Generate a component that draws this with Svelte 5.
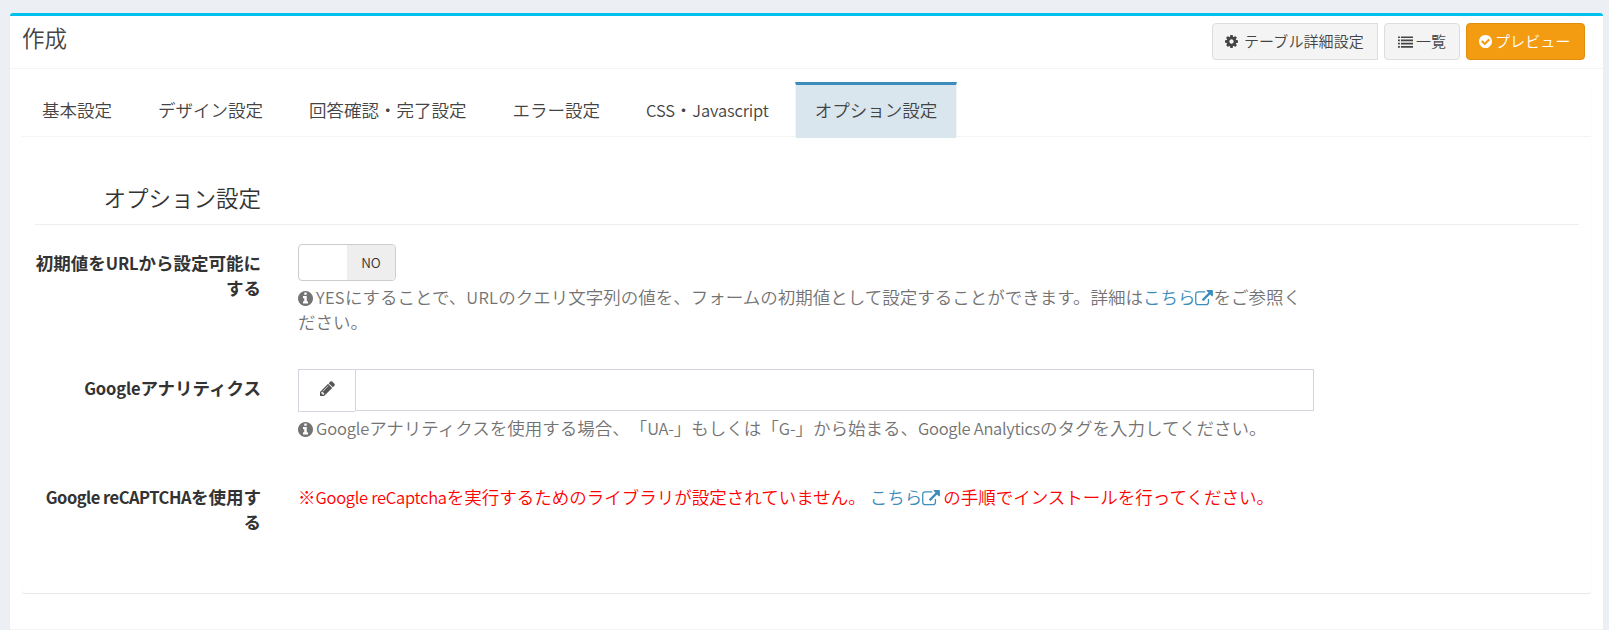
<script>
  const tabs = ['基本設定', 'デザイン設定', '回答確認・完了設定', 'エラー設定', 'CSS・Javascript', 'オプション設定'];
  const split = (text) => text.split(/([A-Za-z]+)/).filter(Boolean);
  const isLatin = (text) => /^[A-Za-z]/.test(text);
  let active = $state(5);
  const ring = 'm640 416q0 209-103 385.5t-279.5 279.5-385.5 103-385.5-103-279.5-279.5-103-385.5 103-385.5 279.5-279.5 385.5-103 385.5 103 279.5 279.5 103 385.5z';
  const icons = {
    cog: 'M1152 896q0-106-75-181t-181-75-181 75-75 181 75 181 181 75 181-75 75-181zm512-109v222q0 12-8 23t-20 13l-185 28q-19 54-39 91 35 50 107 138 10 12 10 25t-9 23q-27 37-99 108t-94 71q-12 0-26-9l-138-108q-44 23-91 38-16 136-29 186-7 28-36 28h-222q-14 0-24.5-8.5t-11.5-21.5l-28-184q-49-16-90-37l-141 107q-10 9-25 9-14 0-25-11-126-114-165-168-7-10-7-23 0-12 8-23 15-21 51-66.5t54-70.5q-27-50-41-99l-183-27q-13-2-21-12.5t-8-23.5v-222q0-12 8-23t19-13l186-28q14-46 39-92-40-57-107-138-10-12-10-24 0-10 9-23 26-36 98.5-107.5t94.5-71.5q13 0 26 10l138 107q44-23 91-38 16-136 29-186 7-28 36-28h222q14 0 24.5 8.5t11.5 21.5l28 184q49 16 90 37l142-107q9-9 24-9 13 0 25 10 129 119 165 170 7 8 7 22 0 12-8 23-15 21-51 66.5t-54 70.5q26 50 41 98l183 28q13 2 21 12.5t8 23.5z',
    list: 'M0 1312h224v192H0zM0 928h224v192H0zM0 544h224v192H0zM0 160h224v192H0zM352 1312h1440v192H352zM352 928h1440v192H352zM352 544h1440v192H352zM352 160h1440v192H352z',
    check: 'M1412 734q0-28-18-46l-91-90q-19-19-45-19t-45 19l-408 407-226-226q-19-19-45-19t-45 19l-91 90q-18 18-18 46 0 27 18 45l362 362q19 19 45 19 27 0 46-19l543-543q18-18 18-45zm252 162q0 209-103 385.5t-279.5 279.5-385.5 103-385.5-103-279.5-279.5-103-385.5 103-385.5 279.5-279.5 385.5-103 385.5 103 279.5 279.5 103 385.5z',
    info: 'M1152 1376v-160q0-14-9-23t-23-9h-96v-512q0-14-9-23t-23-9h-320q-14 0-23 9t-9 23v160q0 14 9 23t23 9h96v320h-96q-14 0-23 9t-9 23v160q0 14 9 23t23 9h448q14 0 23-9t9-23zm-128-896v-160q0-14-9-23t-23-9h-192q-14 0-23 9t-9 23v160q0 14 9 23t23 9h192q14 0 23-9t9-23z' + ring,
    pencil: 'M491 1536l91-91-235-235-91 91v107h128v128h107zm523-928q0-22-22-22-10 0-17 7l-542 542q-7 7-7 17 0 22 22 22 10 0 17-7l542-542q7-7 7-17zm-54-192l416 416-832 832h-416v-416zm683 96q0 53-37 90l-166 166-416-416 166-165q36-38 90-38 53 0 91 38l235 234q37 39 37 91z',
    external: 'M1408 928v320q0 119-84.5 203.5t-203.5 84.5h-832q-119 0-203.5-84.5t-84.5-203.5v-832q0-119 84.5-203.5t203.5-84.5h704q14 0 23 9t9 23v64q0 14-9 23t-23 9h-704q-66 0-113 47t-47 113v832q0 66 47 113t113 47h832q66 0 113-47t47-113v-320q0-14 9-23t23-9h64q14 0 23 9t9 23zm384-864v512q0 26-19 45t-45 19-45-19l-176-176-652 652q-10 10-23 10t-23-10l-114-114q-10-10-10-23t10-23l652-652-176-176q-19-19-19-45t19-45 45-19h512q26 0 45 19t19 45z'
  };
</script>

{#snippet icon(name, box)}
  <svg class="icon {name}" viewBox={box} aria-hidden="true"><path d={icons[name]} /></svg>
{/snippet}

<main class="box">
  <header>
    <h3>作成</h3>
    <div class="tools">
      <button class="wide">{@render icon('cog', '128 128 1536 1536')}<span>テーブル詳細設定</span></button>
      <button class="list-btn">{@render icon('list', '0 0 1792 1664')}<span>一覧</span></button>
      <button class="preview">{@render icon('check', '128 128 1536 1536')}<span>プレビュー</span></button>
    </div>
  </header>

  <section class="card">
    <nav>
      {#each tabs as tab, i}
        <button class="tab" class:active={i === active} onclick={() => (active = i)}>{#each split(tab) as part}{#if isLatin(part)}<span class="lat">{part}</span>{:else}{part}{/if}{/each}</button>
      {/each}
    </nav>
    <div class="pane">
      <h4><span>オプション設定</span></h4>

      <div class="row first">
        <div class="label">初期値を<span class="lat">URL</span>から設定可能に<br />する</div>
        <div class="field">
          <div class="switch"><span class="handle"></span><span class="no">NO</span></div>
          <p class="help">{@render icon('info', '128 128 1536 1536')}<span class="lat caps">YES</span>にすることで、<span class="lat caps">URL</span>のクエリ文字列の値を、フォームの初期値として設定することができます。詳細は<span class="link">こちら{@render icon('external', '0 0 1792 1664')}</span>をご参照ください。</p>
        </div>
      </div>

      <div class="row second">
        <div class="label"><span class="lat">Google</span>アナリティクス</div>
        <div class="field">
          <div class="group">
            <span class="addon">{@render icon('pencil', '128 128 1536 1536')}</span>
            <input type="text" aria-label="Google" />
          </div>
          <p class="help">{@render icon('info', '128 128 1536 1536')}<span class="lat">Google</span>アナリティクスを使用する場合、「<span class="lat">UA-</span>」もしくは「<span class="lat">G-</span>」から始まる、<span class="lat tight">Google Analytics</span>のタグを入力してください。</p>
        </div>
      </div>

      <div class="row third">
        <div class="label"><span class="lat tighter">Google reCAPTCHA</span>を使用す<br />る</div>
        <div class="field">
          <p class="warn">※<span class="lat tight">Google reCaptcha</span>を実行するためのライブラリが設定されていません。<span class="link spaced">こちら{@render icon('external', '0 0 1792 1664')}</span>の手順でインストールを行ってください。</p>
        </div>
      </div>
    </div>
  </section>
</main>

<style>
  :global(body) {
    background: #ecf0f5;
    overflow: hidden;
  }
  .box, button, input {
    font-family: "Noto Sans CJK JP", sans-serif;
    font-weight: 350;
    font-size: 17.5px;
    color: #333;
    text-spacing-trim: space-all;
  }
  .box {
    box-sizing: border-box;
    height: 617px;
    margin: 13px 6px 0 10px;
    border-top: 3px solid #00c0ef;
    border-bottom: 1px solid #f4f4f4;
    border-radius: 3px 3px 0 0;
    background: #fff;
    box-shadow: 0 1px 1px rgba(0, 0, 0, 0.1);
    line-height: 25px;
  }
  .lat { font-size: 16.5px; letter-spacing: -0.15px; line-height: 1; }
  .lat.caps { letter-spacing: 0.3px; }
  .lat.tight { letter-spacing: -0.28px; }
  .lat.tighter { letter-spacing: -0.5px; }
  h3, h4, p { margin: 0; font-weight: 350; }
  header {
    box-sizing: border-box;
    height: 53px;
    padding: 7px 18px 0 12px;
    display: flex;
    justify-content: space-between;
    border-bottom: 1px solid #f4f4f4;
  }
  h3 { font-size: 22.5px; line-height: 29px; color: #444; }
  .tools { display: flex; gap: 6px; }
  .tools button {
    box-sizing: border-box;
    height: 37px;
    padding: 0 0 0 12px;
    display: flex;
    align-items: center;
    border: 1px solid #ddd;
    border-radius: 4px;
    background: #f4f4f4;
    color: #444;
    font-size: 15px;
    letter-spacing: 0.1px;
    line-height: 22px;
    white-space: nowrap;
  }
  .tools button span { padding-bottom: 2px; }
  .tools .wide { width: 166px; gap: 6px; border-radius: 4px 0 0 4px; }
  .tools .list-btn { width: 76px; gap: 3px; padding-left: 13px; }
  .tools .preview { width: 119px; gap: 3px; background: #f39c12; border-color: #e08e0b; color: #fff; }
  .tools .icon { width: 13px; height: 13px; }
  .tools .icon.list { width: 15px; height: 14px; }
  .icon { fill: currentColor; flex: none; }

  .card {
    box-sizing: border-box;
    margin: 13px 12px 0;
    height: 511px;
    border-radius: 3px;
    box-shadow: 0 1px 1px rgba(0, 0, 0, 0.1);
  }
  nav {
    box-sizing: border-box;
    height: 55px;
    display: flex;
    gap: 6px;
    border-bottom: 1px solid #f4f4f4;
  }
  .tab {
    box-sizing: border-box;
    height: 56px;
    padding: 0 19px 4px;
    border: 1px solid transparent;
    border-top: 3px solid transparent;
    border-bottom: 0;
    background: transparent;
    color: #444;
    white-space: nowrap;
    line-height: 25px;
  }
  .tab.active { background: #d9e6ee; border-color: #3c8dbc #f4f4f4; }
  .pane { padding: 38px 12px 0 13px; }
  h4 {
    box-sizing: border-box;
    height: 50px;
    padding-top: 6px;
    border-bottom: 1px solid #eee;
    font-size: 22.5px;
    line-height: 32px;
  }
  h4 span { display: block; width: 226px; text-align: right; }
  .row { display: grid; grid-template-columns: 226px 1016px; column-gap: 37px; }
  .first { margin-top: 19px; height: 125px; }
  .second { height: 109px; }
  .label { font-weight: 700; text-align: right; padding-top: 6px; white-space: nowrap; }
  .switch {
    box-sizing: border-box;
    width: 98px;
    height: 37px;
    display: flex;
    border: 1px solid #ccc;
    border-radius: 4px;
    overflow: hidden;
  }
  .handle { width: 48px; }
  .no { flex: 1; background: #eee; font-size: 13.5px; line-height: 34px; text-align: center; }
  .help { color: #737373; margin-top: 3px; }
  .help .icon.info { width: 15px; height: 15px; margin-right: 3px; vertical-align: -2px; }
  .link { color: #3c8dbc; white-space: nowrap; }
  .icon.external { width: 18px; height: 16.5px; vertical-align: -2px; }
  .spaced { margin: 0 3px 0 4px; }
  .group { display: flex; align-items: flex-start; }
  .addon {
    box-sizing: border-box;
    width: 57px;
    height: 43px;
    display: flex;
    align-items: center;
    justify-content: center;
    padding-bottom: 4px;
    border: 1px solid #d2d6de;
    border-right: 0;
    color: #555;
  }
  .addon .icon { width: 15px; height: 15px; }
  input {
    box-sizing: border-box;
    flex: 1;
    height: 42px;
    border: 1px solid #d2d6de;
    border-radius: 0;
    outline: 0;
    background: #fff;
  }
  .warn { color: #f00; padding-top: 6px; }
</style>
